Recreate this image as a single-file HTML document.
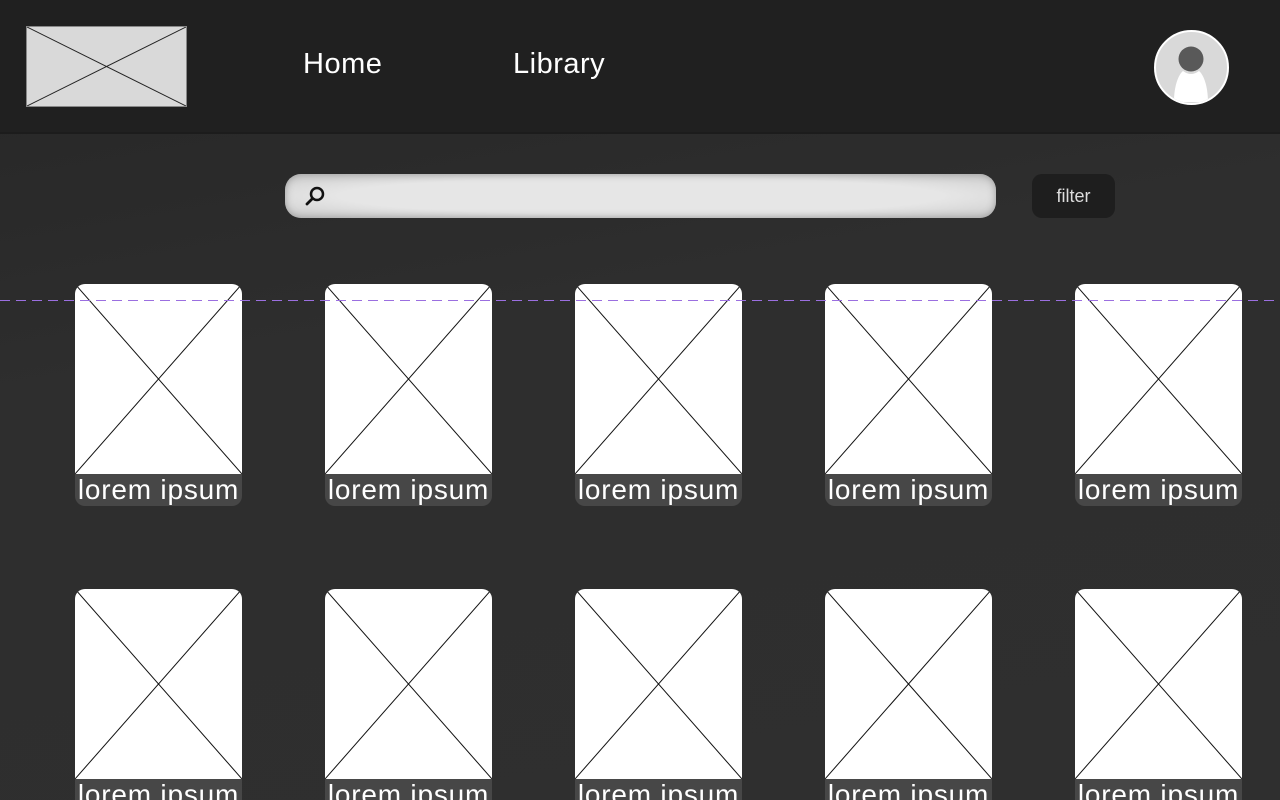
<!DOCTYPE html>
<html><head><style>
*{margin:0;padding:0;box-sizing:border-box}
html{width:1280px;height:800px;overflow:hidden}
body{width:1280px;height:800px;overflow:hidden;background:linear-gradient(170deg,#262626,#2e2e2e 40%,#2f2f2f);font-family:"Liberation Sans",sans-serif;position:relative}
.hdr{position:absolute;left:0;top:0;width:1280px;height:134px;background:#202020;border-bottom:2px solid #1c1c1c}
.logo{position:absolute;left:26px;top:26px;width:161px;height:81px;background:#d9d9d9;border:1px solid #888}
.nav{position:absolute;top:48px;color:#fff;font-size:29px;letter-spacing:0.5px}
.av{position:absolute;left:1154px;top:30px;width:75px;height:75px;border-radius:50%;background:#d9d9d9;border:2px solid #fff;overflow:hidden}
.search{position:absolute;left:285px;top:174px;width:711px;height:44px;border-radius:16px;background:radial-gradient(ellipse at center,#e6e6e6 60%,#c8c8c8 100%);box-shadow:inset 0 0 8px #999}
.filter{position:absolute;left:1032px;top:174px;width:83px;height:44px;border-radius:10px;background:#1e1e1e;color:#ddd;font-size:18px;text-align:center;line-height:44px}
.card{position:absolute;width:167px;height:222px;border-radius:10px;overflow:hidden;background:#474747}
.card svg{display:block;background:#fff}
.card span{display:block;color:#fff;font-size:28px;line-height:32px;text-align:center;white-space:nowrap;letter-spacing:0.8px}
.dash{position:absolute;left:0;top:300px;width:1280px;height:1px;background:repeating-linear-gradient(90deg,#9b6fe0 0 10px,transparent 10px 16px)}
</style></head><body>
<div class="hdr">
<svg class="logo" viewBox="0 0 161 81" preserveAspectRatio="none"><line x1="0" y1="0" x2="161" y2="81" stroke="#222"/><line x1="161" y1="0" x2="0" y2="81" stroke="#222"/></svg>
<div class="nav" style="left:303px">Home</div>
<div class="nav" style="left:513px">Library</div>
<div class="av"><svg width="75" height="75" viewBox="0 0 75 75" style="position:absolute;left:-2px;top:-2px"><circle cx="37" cy="29" r="12.5" fill="#595959"/><path d="M20 72 C20 55 25 44 29 41 Q37 47 45 41 C49 44 54 55 54 72 Z" fill="#fff"/></svg></div>
</div>
<div class="search"><svg width="24" height="24" viewBox="0 0 24 24" style="position:absolute;left:18px;top:10px"><circle cx="14" cy="10" r="6" fill="none" stroke="#111" stroke-width="2.5"/><line x1="9.5" y1="14.5" x2="4" y2="20" stroke="#111" stroke-width="2.8" stroke-linecap="round"/></svg></div>
<div class="filter">filter</div>
<div class="cards">
<div class="card" style="left:75px;top:284px"><svg width="167" height="190"><line x1="0" y1="0" x2="167" y2="190" stroke="#111"/><line x1="167" y1="0" x2="0" y2="190" stroke="#111"/></svg><span>lorem ipsum</span></div>
<div class="card" style="left:325px;top:284px"><svg width="167" height="190"><line x1="0" y1="0" x2="167" y2="190" stroke="#111"/><line x1="167" y1="0" x2="0" y2="190" stroke="#111"/></svg><span>lorem ipsum</span></div>
<div class="card" style="left:575px;top:284px"><svg width="167" height="190"><line x1="0" y1="0" x2="167" y2="190" stroke="#111"/><line x1="167" y1="0" x2="0" y2="190" stroke="#111"/></svg><span>lorem ipsum</span></div>
<div class="card" style="left:825px;top:284px"><svg width="167" height="190"><line x1="0" y1="0" x2="167" y2="190" stroke="#111"/><line x1="167" y1="0" x2="0" y2="190" stroke="#111"/></svg><span>lorem ipsum</span></div>
<div class="card" style="left:1075px;top:284px"><svg width="167" height="190"><line x1="0" y1="0" x2="167" y2="190" stroke="#111"/><line x1="167" y1="0" x2="0" y2="190" stroke="#111"/></svg><span>lorem ipsum</span></div>
<div class="card" style="left:75px;top:589px"><svg width="167" height="190"><line x1="0" y1="0" x2="167" y2="190" stroke="#111"/><line x1="167" y1="0" x2="0" y2="190" stroke="#111"/></svg><span>lorem ipsum</span></div>
<div class="card" style="left:325px;top:589px"><svg width="167" height="190"><line x1="0" y1="0" x2="167" y2="190" stroke="#111"/><line x1="167" y1="0" x2="0" y2="190" stroke="#111"/></svg><span>lorem ipsum</span></div>
<div class="card" style="left:575px;top:589px"><svg width="167" height="190"><line x1="0" y1="0" x2="167" y2="190" stroke="#111"/><line x1="167" y1="0" x2="0" y2="190" stroke="#111"/></svg><span>lorem ipsum</span></div>
<div class="card" style="left:825px;top:589px"><svg width="167" height="190"><line x1="0" y1="0" x2="167" y2="190" stroke="#111"/><line x1="167" y1="0" x2="0" y2="190" stroke="#111"/></svg><span>lorem ipsum</span></div>
<div class="card" style="left:1075px;top:589px"><svg width="167" height="190"><line x1="0" y1="0" x2="167" y2="190" stroke="#111"/><line x1="167" y1="0" x2="0" y2="190" stroke="#111"/></svg><span>lorem ipsum</span></div>
</div>
<div class="dash"></div>
</body></html>
